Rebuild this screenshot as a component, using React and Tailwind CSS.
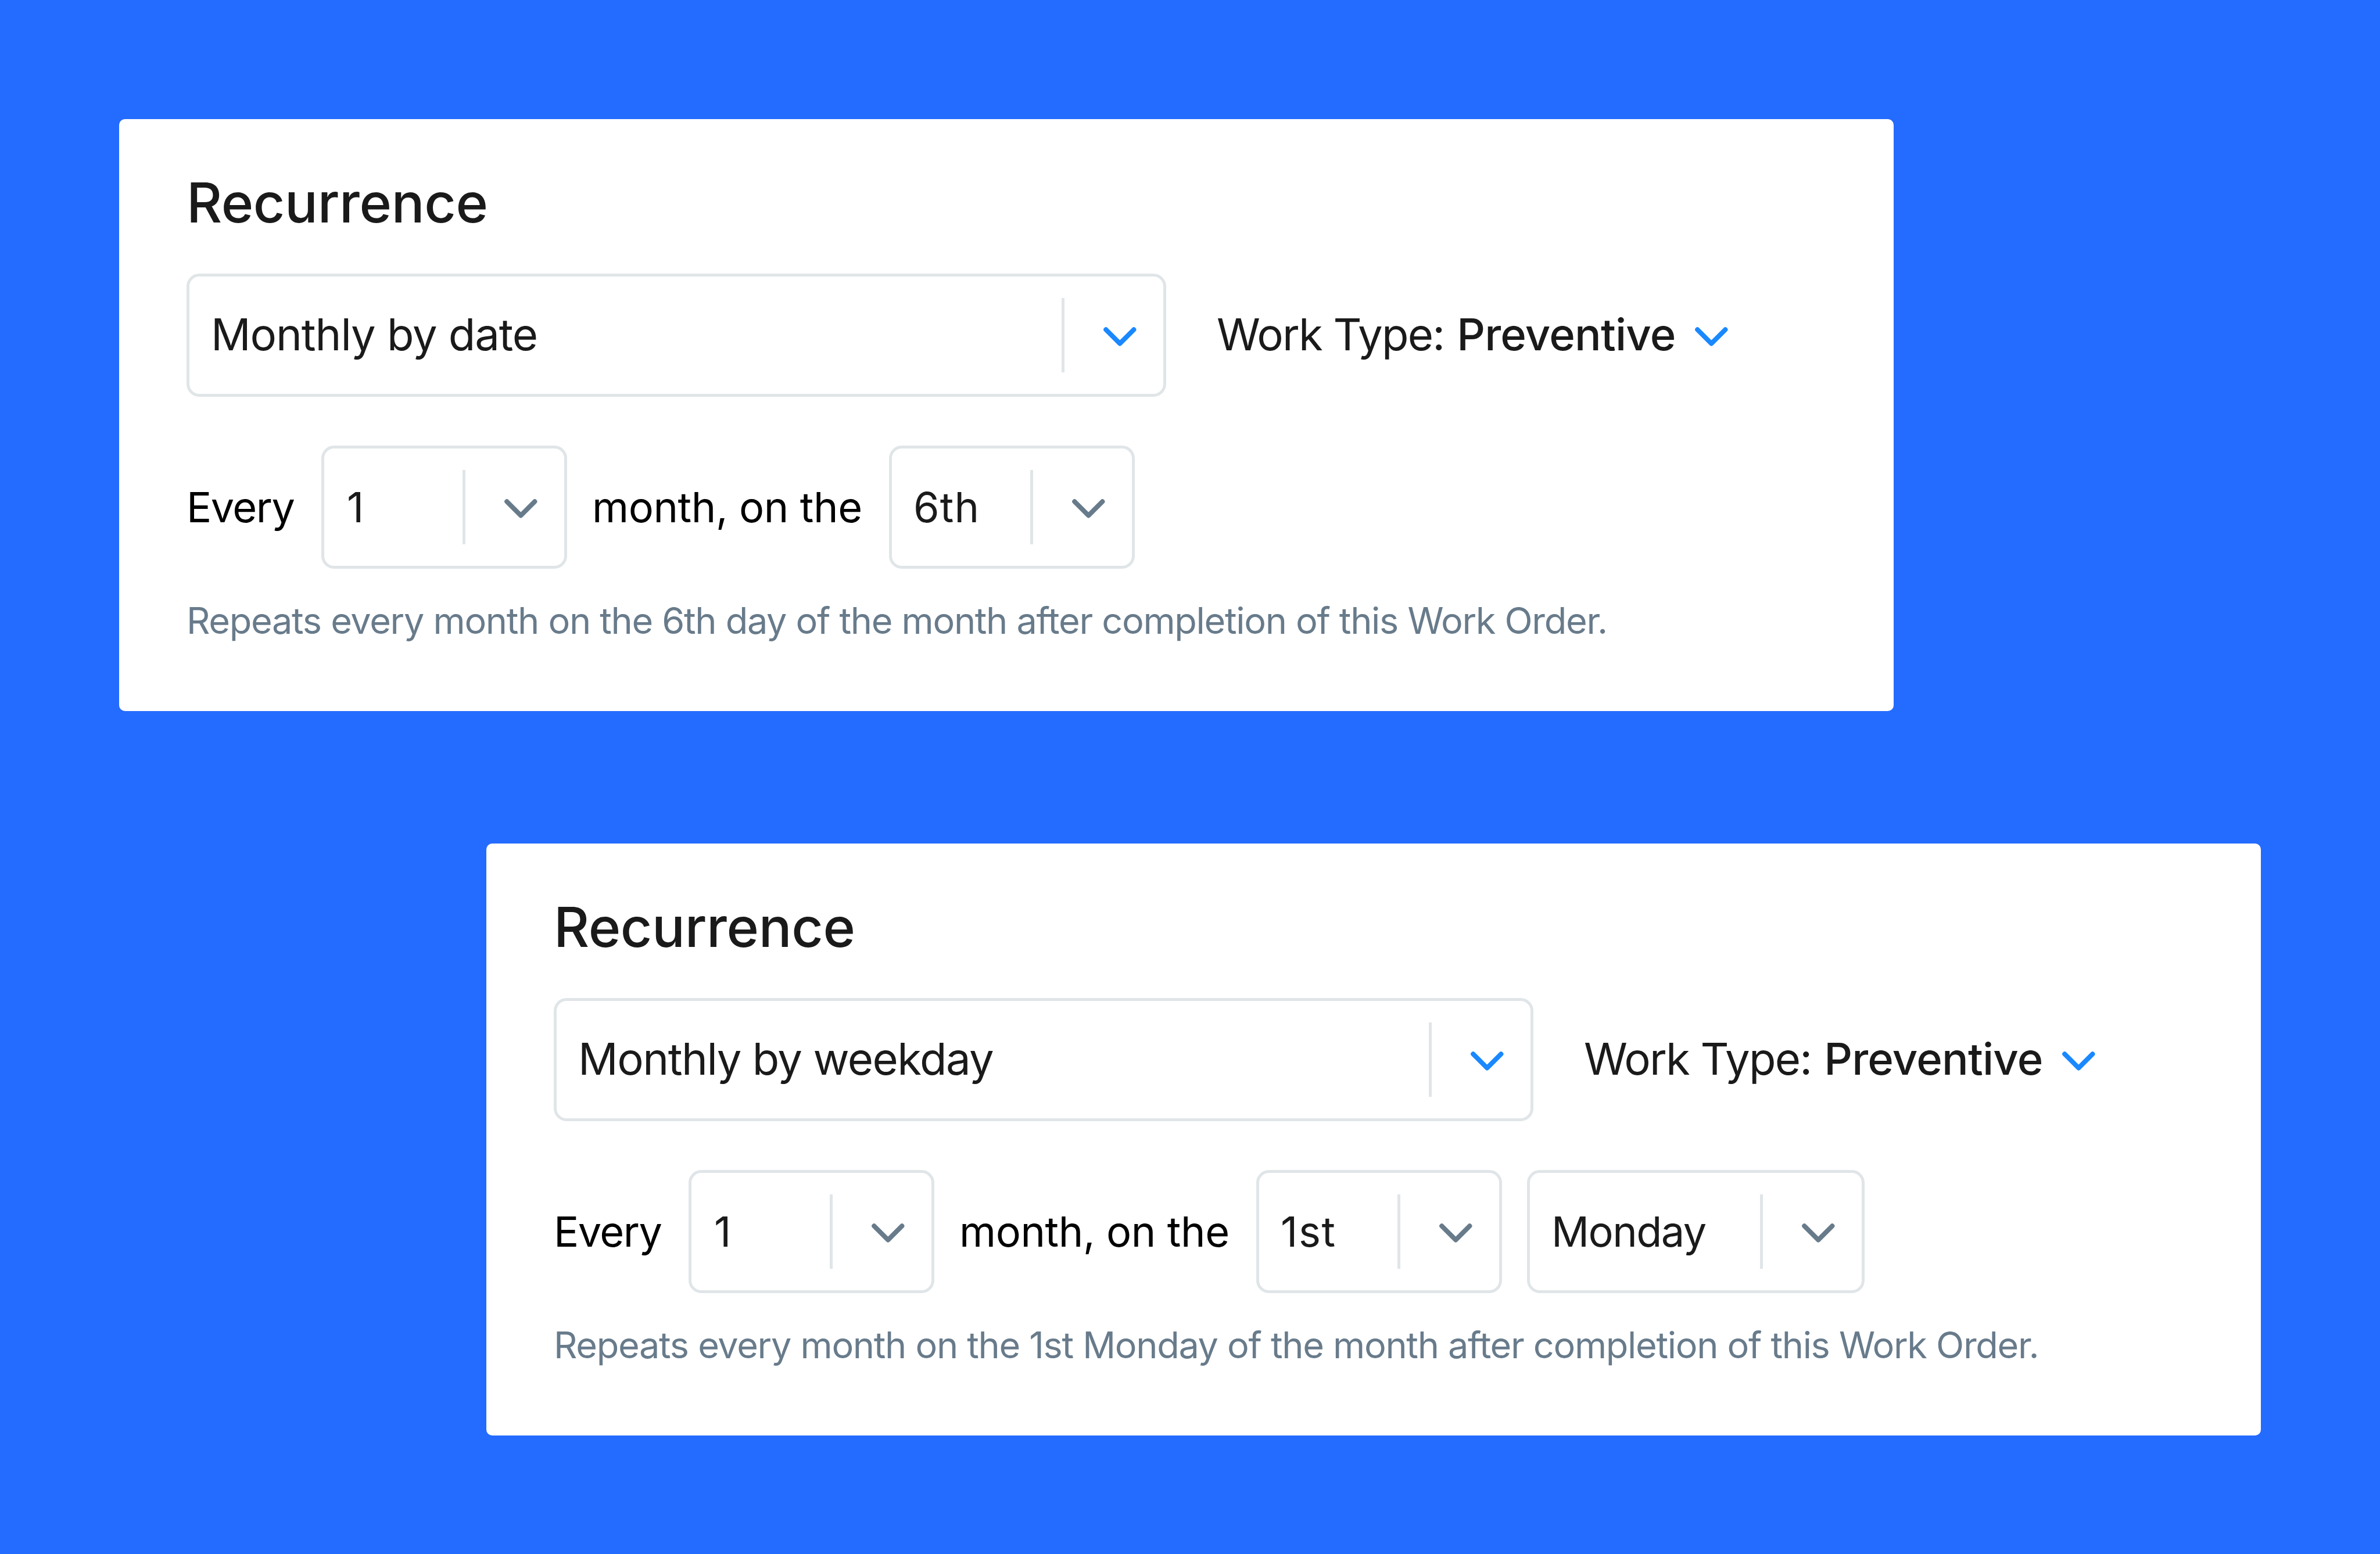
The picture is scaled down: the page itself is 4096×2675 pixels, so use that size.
const FONT = 'font-[Inter,"Liberation_Sans",sans-serif]'

function Chevron({ className }) {
  return (
    <svg viewBox="0 0 57 33" fill="none" className={`w-[57px] h-[33px] shrink-0 mt-1 ${className}`}>
      <path d="M4.3 4.3 28.3 28.3 52.3 4.3" stroke="currentColor" strokeWidth="8.2" strokeLinecap="round" strokeLinejoin="round" />
    </svg>
  )
}

function Select({ children, className, chevron = 'text-[#687b8b]' }) {
  return (
    <div className={`flex h-[212px] shrink-0 items-center rounded-[22px] border-5 border-[#e0e5e8] pl-[37px] pr-[46px] text-[#1a1a1a] ${className}`}>
      <span className="flex-1 whitespace-nowrap">{children}</span>
      <span className="mr-[67px] h-[128px] w-[5px] bg-[#e0e5e8]" />
      <Chevron className={chevron} />
    </div>
  )
}

function RecurrenceCard({ schedule, scheduleTracking, day, dayTracking, weekday, summary, className }) {
  return (
    <section className={`h-[1019px] w-[3054px] rounded-[10px] bg-white pl-[116px] pt-[84px] ${className}`}>
      <h2 className="text-[94.6px] font-medium leading-[120px] tracking-[-0.35px] text-[#1a1a1a]">Recurrence</h2>

      {/* Schedule + work type */}
      <div className="mt-[62px] flex items-center text-[76px] leading-[92px] text-[#1a1a1a]">
        <Select className={`w-[1686px] ${scheduleTracking}`} chevron="text-[#1a88ff]">
          <span className="block pb-1">{schedule}</span>
        </Select>
        <div className="ml-[87px] flex items-center whitespace-nowrap">
          <span className="pb-1 tracking-[-1.8px]">Work Type:</span>
          <span className="ml-[22px] mr-[33px] pb-1 font-medium tracking-[-0.8px]">Preventive</span>
          <Chevron className="text-[#1a88ff]" />
        </div>
      </div>

      {/* Interval */}
      <div className="mt-[84px] flex items-center text-[72px] leading-[88px] text-black">
        <span className="w-[232px] tracking-[-1.5px]">Every</span>
        <Select className="w-[423px]">
          <span className="pl-0.5">1</span>
        </Select>
        <span className="w-[554px] whitespace-nowrap pl-[43px] tracking-[-0.4px]">month, on the</span>
        <Select className={`w-[423px] ${dayTracking}`}>{day}</Select>
        {weekday && <Select className="ml-[43px] w-[581px] tracking-[-1.5px]">{weekday}</Select>}
      </div>

      <p className="mt-[49px] whitespace-nowrap text-[63px] leading-[80px] tracking-[-1.31px] text-[#687b8b]">{summary}</p>
    </section>
  )
}

export default function App() {
  return (
    <div className={`h-[2675px] w-[4096px] overflow-hidden bg-[#246bff] pl-[205px] pt-[205px] ${FONT}`}>
      <RecurrenceCard
        schedule="Monthly by date"
        scheduleTracking="tracking-[-1.1px]"
        day="6th"
        dayTracking="tracking-[1.2px]"
        summary="Repeats every month on the 6th day of the month after completion of this Work Order."
      />
      <RecurrenceCard
        className="ml-[632px] mt-[228px]"
        schedule="Monthly by weekday"
        scheduleTracking="tracking-[-1.5px]"
        day="1st"
        dayTracking="tracking-[1.6px]"
        weekday="Monday"
        summary="Repeats every month on the 1st Monday of the month after completion of this Work Order."
      />
    </div>
  )
}
